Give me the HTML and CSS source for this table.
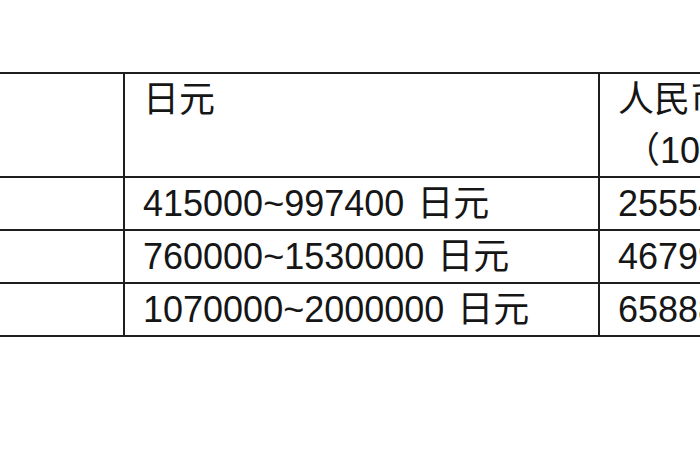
FILE: index.html
```html
<!DOCTYPE html>
<html lang="zh">
<head>
<meta charset="utf-8">
<title>日元 人民币</title>
<link rel="stylesheet" href="styles.css">
</head>
<body>
<div class="page">
  <table class="rates">
    <colgroup>
      <col class="c1">
      <col class="c2">
      <col class="c3">
    </colgroup>
    <tr class="head">
      <td class="first"></td>
      <td>日元</td>
      <td>人民币<br><span class="paren">（100日元=6.1577人民币）</span></td>
    </tr>
    <tr>
      <td class="first"></td>
      <td>415000~997400<span class="unit">日元</span></td>
      <td>25554~61417<span class="unit">人民币</span></td>
    </tr>
    <tr>
      <td class="first"></td>
      <td>760000~1530000<span class="unit">日元</span></td>
      <td>46799~94213<span class="unit">人民币</span></td>
    </tr>
    <tr>
      <td class="first"></td>
      <td>1070000~2000000<span class="unit">日元</span></td>
      <td>65888~123154<span class="unit">人民币</span></td>
    </tr>
  </table>
</div>
</body>
</html>
```

FILE: styles.css
```css
html, body {
  margin: 0;
  padding: 0;
  background: #ffffff;
  overflow: hidden;
}

.page {
  width: 700px;
  height: 470px;
  overflow: hidden;
  padding-top: 72px;
  box-sizing: border-box;
}

.rates {
  border-collapse: collapse;
  table-layout: fixed;
  width: 900px;
  font-family: "Liberation Sans", "Noto Sans CJK SC", sans-serif;
  font-size: 36px;
  color: #161616;
}

.c1 { width: 124px; }
.c2 { width: 475px; }
.c3 { width: 301px; }

.rates td {
  border: 2px solid #1e1e1e;
  padding: 0 0 0 18px;
  line-height: 51px;
  white-space: nowrap;
  overflow: hidden;
  vertical-align: middle;
}

.rates td.first {
  border-left: none;
}

.rates .head td {
  vertical-align: top;
  height: 102px;
}

.paren {
  display: inline-block;
  margin-left: 6px;
}

.unit {
  margin-left: 13px;
}
```
